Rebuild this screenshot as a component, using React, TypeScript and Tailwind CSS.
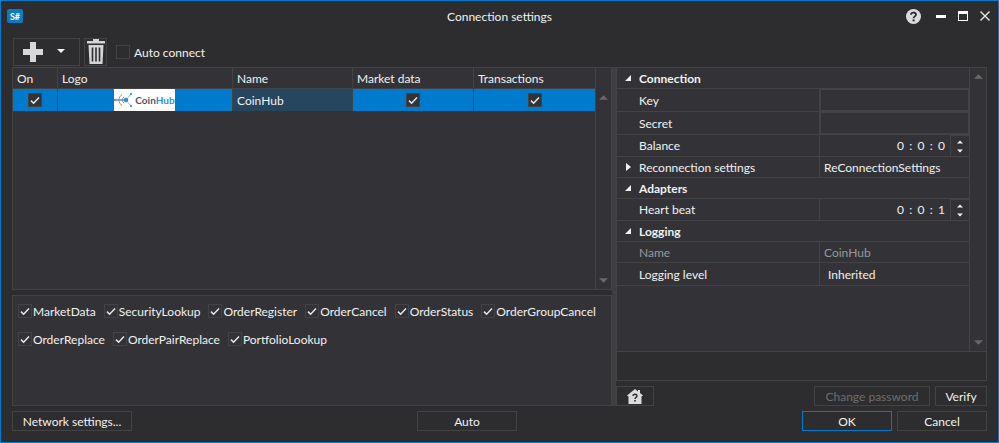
import React from "react";

const B = "border-[#434346]";

function Check({ dark = false }: { dark?: boolean }) {
  return (
    <span className={`w-[14px] h-[14px] shrink-0 border border-[#434346] flex items-center justify-center ${dark ? "bg-[#333337]" : ""}`}>
      <svg width="10" height="9" viewBox="0 0 10 9">
        <path d="M1 4.6 L3.6 7.2 L9 1.4" fill="none" stroke="#e8e8e8" strokeWidth="1.5" />
      </svg>
    </span>
  );
}

function Btn({ w, children, cls = "" }: { w: string; children: React.ReactNode; cls?: string }) {
  return (
    <div className={`${w} h-[20px] border border-[#434346] flex items-center justify-center pt-[1px] text-[#f1f1f1] ${cls}`}>
      {children}
    </div>
  );
}

function Tri({ dir, color = "#686868", w = 9, h = 5 }: { dir: "up" | "down"; color?: string; w?: number; h?: number }) {
  return (
    <svg width={w} height={h} viewBox="0 0 10 5">
      <path d={dir === "up" ? "M0 5 L5 0 L10 5 Z" : "M0 0 L10 0 L5 5 Z"} fill={color} />
    </svg>
  );
}

function Corner() {
  return (
    <svg width="8" height="8" viewBox="0 0 8 8" className="shrink-0">
      <path d="M7 1 V7 H1 Z" fill="#f1f1f1" />
    </svg>
  );
}

function Right() {
  return (
    <svg width="5" height="8" viewBox="0 0 5 8" className="shrink-0">
      <path d="M0 0 L5 4 L0 8 Z" fill="#f1f1f1" />
    </svg>
  );
}

function Category({ name, h }: { name: string; h: string }) {
  return (
    <div className={`${h} flex items-center border-b ${B}`}>
      <span className="w-[22px] pl-[7px] flex"><Corner /></span>
      <span className="font-bold text-[#f1f1f1] pt-[1px]">{name}</span>
    </div>
  );
}

function Spin({ value }: { value: string }) {
  return (
    <div className="flex-1 flex items-center justify-end">
      <span className="mr-[4px] pt-[1px] tracking-[1.1px]">{value}</span>
      <span className={`w-[19px] h-full flex flex-col items-center justify-center gap-[5px] border-l border-t ${B}`}>
        <Tri dir="up" color="#f1f1f1" w={6} h={4} />
        <Tri dir="down" color="#f1f1f1" w={6} h={4} />
      </span>
    </div>
  );
}

function Row({ name, h, children, muted = false, expander = false, nameTop = "pt-[2px]" }: { name: string; h: string; children?: React.ReactNode; muted?: boolean; expander?: boolean; nameTop?: string }) {
  return (
    <div className={`${h} flex border-b ${B} ${muted ? "text-[#999999]" : ""}`}>
      <div className={`w-[203px] flex items-center border-r ${B}`}>
        <span className="w-[22px] pl-[9px] flex">{expander && <Right />}</span>
        <span className={nameTop}>{name}</span>
      </div>
      {children}
    </div>
  );
}

function Flag({ label, ml = "" }: { label: string; ml?: string }) {
  return (
    <div className={`flex items-center gap-[1px] ${ml}`}>
      <Check />
      <span className="pt-[1px]">{label}</span>
    </div>
  );
}

export default function App() {
  return (
    <div
      className="w-[999px] h-[443px] border border-[#007acc] bg-[#2d2d30] flex flex-col text-[12px] text-[#f1f1f1] overflow-hidden"
      style={{ fontFamily: "Lato, sans-serif" }}
    >
      {/* Title bar */}
      <div className="h-[36px] shrink-0">
        <div className="h-[30px] grid grid-cols-[1fr_auto_1fr] items-center px-[6px]">
          <div className="w-[16px] h-[14px] rounded-[2px] bg-[#0a7cc4] flex items-center justify-center text-[9px] font-bold leading-none text-white">S#</div>
          <div className="text-center leading-none pt-[1px]">Connection settings</div>
          <div className="flex items-center justify-end pr-[2px]">
            <svg width="15" height="15" viewBox="0 0 15 15" className="mr-[15px]">
              <circle cx="7.5" cy="7.5" r="7.5" fill="#dcdcdc" />
              <path d="M5 5.8 C5 2.8 10 2.8 10 5.6 C10 7.4 7.6 7.4 7.6 9.2" fill="none" stroke="#2d2d30" strokeWidth="1.8" />
              <rect x="6.6" y="10.4" width="2" height="2" fill="#2d2d30" />
            </svg>
            <div className="w-[10px] h-[3px] bg-white mr-[12px]" />
            <div className="w-[10px] h-[10px] border border-white border-t-[3px] mr-[12px]" />
            <svg width="10" height="10" viewBox="0 0 10 10">
              <path d="M0.5 0.5 L9.5 9.5 M9.5 0.5 L0.5 9.5" stroke="#e8e8e8" strokeWidth="1.4" />
            </svg>
          </div>
        </div>
      </div>

      {/* Toolbar */}
      <div className="h-[29px] shrink-0 flex items-center ml-[12px]">
        <div className={`w-[67px] h-[28px] border ${B} flex items-center pl-[9px]`}>
          <svg width="20" height="20" viewBox="0 0 20 20">
            <path d="M7 0 H13 V7 H20 V13 H13 V20 H7 V13 H0 V7 H7 Z" fill="#d8d8d8" />
          </svg>
          <span className="ml-[14px] mb-[1px] flex"><Tri dir="down" color="#f1f1f1" w={8} h={4} /></span>
        </div>
        <div className={`ml-[4px] w-[23px] h-[28px] border ${B} flex items-center justify-center`}>
          <svg width="20" height="27" viewBox="0 0 20 27">
            <path d="M7 1 H13 V3 H19 V5.5 H1 V3 H7 Z" fill="#d4d4d4" />
            <path d="M2.5 7 H17.5 L16.5 26 H3.5 Z" fill="#d4d4d4" />
            <path d="M6.5 9.5 V23.5 M10 9.5 V23.5 M13.5 9.5 V23.5" stroke="#2d2d30" strokeWidth="1.6" />
          </svg>
        </div>
        <span className={`ml-[9px] w-[14px] h-[14px] border ${B}`} />
        <span className="ml-[4px] pt-[2px]">Auto connect</span>
      </div>

      {/* Main */}
      <div className="h-[339px] shrink-0 mt-[1px] flex mx-[11px]">
        {/* Left column */}
        <div className="w-[600px] shrink-0 flex flex-col">
          <div className={`h-[223px] shrink-0 border ${B} bg-[#333337] flex`}>
            <div className="flex-1 flex flex-col">
              <div className={`h-[21px] flex items-center border-b ${B}`}>
                <div className={`w-[45px] h-full flex items-center pl-[4px] pt-[1px] border-r ${B}`}>On</div>
                <div className={`w-[175px] h-full flex items-center pl-[4px] pt-[1px] border-r ${B}`}>Logo</div>
                <div className={`w-[120px] h-full flex items-center pl-[4px] pt-[1px] border-r ${B}`}>Name</div>
                <div className={`w-[121px] h-full flex items-center pl-[4px] pt-[1px] border-r ${B}`}>Market data</div>
                <div className="flex-1 h-full flex items-center pl-[4px] pt-[1px]">Transactions</div>
              </div>
              <div className="h-[22px] flex">
                <div className={`w-[45px] bg-[#007acc] flex items-center justify-center border-r ${B}`}><Check dark /></div>
                <div className={`w-[175px] bg-[#007acc] flex items-center justify-center pr-[1px] border-r ${B}`}>
                  <div className="w-[61px] h-full bg-white flex items-center justify-center gap-[1px]">
                    <svg width="20" height="16" viewBox="0 0 20 16">
                      <path d="M0 8 H11" stroke="#7a8288" strokeWidth="1.4" fill="none" />
                      <path d="M8 2.5 A6.5 6.5 0 0 0 8 13.5 M10 5 A3.5 3.5 0 0 0 10 11" stroke="#8a8f94" strokeWidth="1" fill="none" />
                      <path d="M12 8 L17 2 M12 8 L17 14" stroke="#9aa0a6" strokeWidth="0.8" fill="none" />
                      <circle cx="12" cy="8" r="2.2" fill="#2f8fd0" />
                      <circle cx="1.5" cy="8" r="1.2" fill="#6a9cc0" />
                      <circle cx="17" cy="2" r="1.2" fill="#6a9cc0" />
                      <circle cx="17" cy="14" r="1.2" fill="#6a9cc0" />
                    </svg>
                    <span className="text-[10px] font-bold leading-none text-[#555555]">Coin<span className="text-[#2f8fd0]">Hub</span></span>
                  </div>
                </div>
                <div className={`w-[120px] bg-[#26455e] flex items-center pl-[4px] pt-[1px] border-r ${B}`}>CoinHub</div>
                <div className={`w-[121px] bg-[#007acc] flex items-center justify-center border-r ${B}`}><Check dark /></div>
                <div className="flex-1 bg-[#007acc] flex items-center justify-center"><Check dark /></div>
              </div>
            </div>
            <div className={`w-[16px] border-l ${B} flex flex-col items-center`}>
              <div className="h-[21px] w-full" />
              <div className="mt-[6px] flex"><Tri dir="up" /></div>
              <div className="flex-1" />
              <div className="mb-[6px] flex"><Tri dir="down" /></div>
            </div>
          </div>
          <div className="h-[5px] shrink-0" />
          <div className={`flex-1 border ${B} bg-[#333337] px-[5px] pt-[8px]`}>
            <div className="flex h-[14px] items-center">
              <Flag label="MarketData" />
              <Flag label="SecurityLookup" ml="ml-[8px]" />
              <Flag label="OrderRegister" ml="ml-[8px]" />
              <Flag label="OrderCancel" ml="ml-[8px]" />
              <Flag label="OrderStatus" ml="ml-[8px]" />
              <Flag label="OrderGroupCancel" ml="ml-[8px]" />
            </div>
            <div className="flex h-[14px] items-center mt-[14px]">
              <Flag label="OrderReplace" />
              <Flag label="OrderPairReplace" ml="ml-[8px]" />
              <Flag label="PortfolioLookup" ml="ml-[8px]" />
            </div>
          </div>
        </div>

        {/* Splitter */}
        <div className="w-[4px] shrink-0 bg-[#3f3f42]" />

        {/* Right column */}
        <div className="flex-1 flex flex-col">
          <div className={`h-[285px] shrink-0 border ${B} bg-[#333337] flex`}>
            <div className="flex-1 flex flex-col">
              <Category name="Connection" h="h-[21px]" />
              <Row name="Key" h="h-[23px]">
                <div className={`flex-1 border ${B}`} />
              </Row>
              <Row name="Secret" h="h-[23px]">
                <div className={`flex-1 border ${B}`} />
              </Row>
              <Row name="Balance" h="h-[22px]" nameTop="pt-[1px]"><Spin value="0 : 0 : 0" /></Row>
              <Row name="Reconnection settings" h="h-[21px]" expander>
                <div className="flex-1 flex items-center pl-[4px] pt-[2px]">ReConnectionSettings</div>
              </Row>
              <Category name="Adapters" h="h-[21px]" />
              <Row name="Heart beat" h="h-[22px]" nameTop="pt-[1px]"><Spin value="0 : 0 : 1" /></Row>
              <Category name="Logging" h="h-[21px]" />
              <Row name="Name" h="h-[21px]" muted>
                <div className="flex-1 flex items-center pl-[4px] pt-[2px]">CoinHub</div>
              </Row>
              <Row name="Logging level" h="h-[23px]">
                <div className="flex-1 flex items-center pl-[8px] pt-[2px]">Inherited</div>
              </Row>
            </div>
            <div className={`w-[17px] border-l ${B} flex flex-col items-center`}>
              <div className="mt-[6px] flex"><Tri dir="up" /></div>
              <div className="flex-1" />
              <div className="mb-[6px] flex"><Tri dir="down" /></div>
            </div>
          </div>
          <div className={`h-[29px] shrink-0 border border-t-0 ${B}`} />
          <div className="h-[5px] shrink-0" />
          <div className="h-[20px] shrink-0 flex items-center">
            <Btn w="w-[38px]">
              <svg width="16" height="15" viewBox="0 0 16 15">
                <path d="M8 0 L11 2.4 V1 H13 V4 L16 6.6 L14.5 7.6 V15 H1.5 V7.6 L0 6.6 Z" fill="#dcdcdc" />
                <path d="M6 7 C6 4.6 10 4.6 10 7 C10 8.4 8 8.4 8 10" fill="none" stroke="#2d2d30" strokeWidth="1.4" />
                <rect x="7.2" y="11" width="1.6" height="1.6" fill="#2d2d30" />
              </svg>
            </Btn>
            <div className="flex-1" />
            <Btn w="w-[116px]" cls="!text-[#6d6d6d]">Change password</Btn>
            <Btn w="w-[52px]" cls="ml-[5px]">Verify</Btn>
          </div>
        </div>
      </div>

      {/* Footer */}
      <div className="flex-1 flex items-start mx-[11px] pt-[5px]">
        <Btn w="w-[120px]">Network settings...</Btn>
        <div className="flex-1 flex justify-center">
          <Btn w="w-[100px]">Auto</Btn>
        </div>
        <Btn w="w-[90px]" cls="!border-[#007acc]">OK</Btn>
        <Btn w="w-[90px]" cls="ml-[5px]">Cancel</Btn>
      </div>
    </div>
  );
}
